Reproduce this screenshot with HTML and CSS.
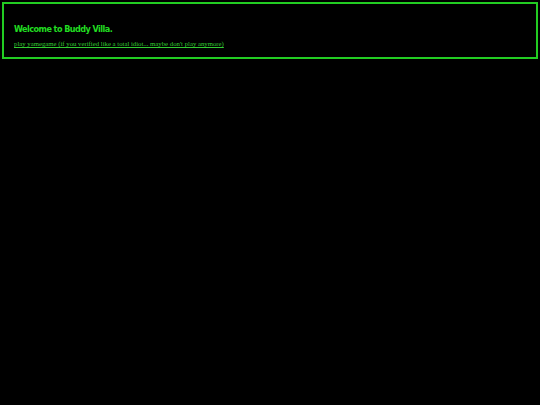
FILE: index.html
```html
<!DOCTYPE html>
<html>
<head>
<meta charset="utf-8">
<link rel="stylesheet" href="styles.css">
</head>
<body>
<div class="box">
<h1 class="title">Welcome to Buddy Villa.</h1>
<a class="link" href="#">play yamegame (if you verified like a total idiot... maybe don't play anymore)</a>
</div>
</body>
</html>
```
FILE: styles.css
```css
html, body { background: #000; }
body { margin: 2px; }
.box {
  border: 2px solid #22cc22;
  padding: 18px 10px 8px 10px;
}
.title {
  margin: 0 0 3px 0;
  font-family: "Comic Sans MS", "DejaVu Sans Condensed", sans-serif;
  font-weight: bold;
  font-size: 9px;
  letter-spacing: -0.55px;
  color: #22dd22;
  line-height: 14px;
}
.link {
  display: block;
  width: max-content;
  font-family: "Liberation Serif", serif;
  font-size: 6.75px;
  line-height: 10px;
  color: #33cc33;
}
```
